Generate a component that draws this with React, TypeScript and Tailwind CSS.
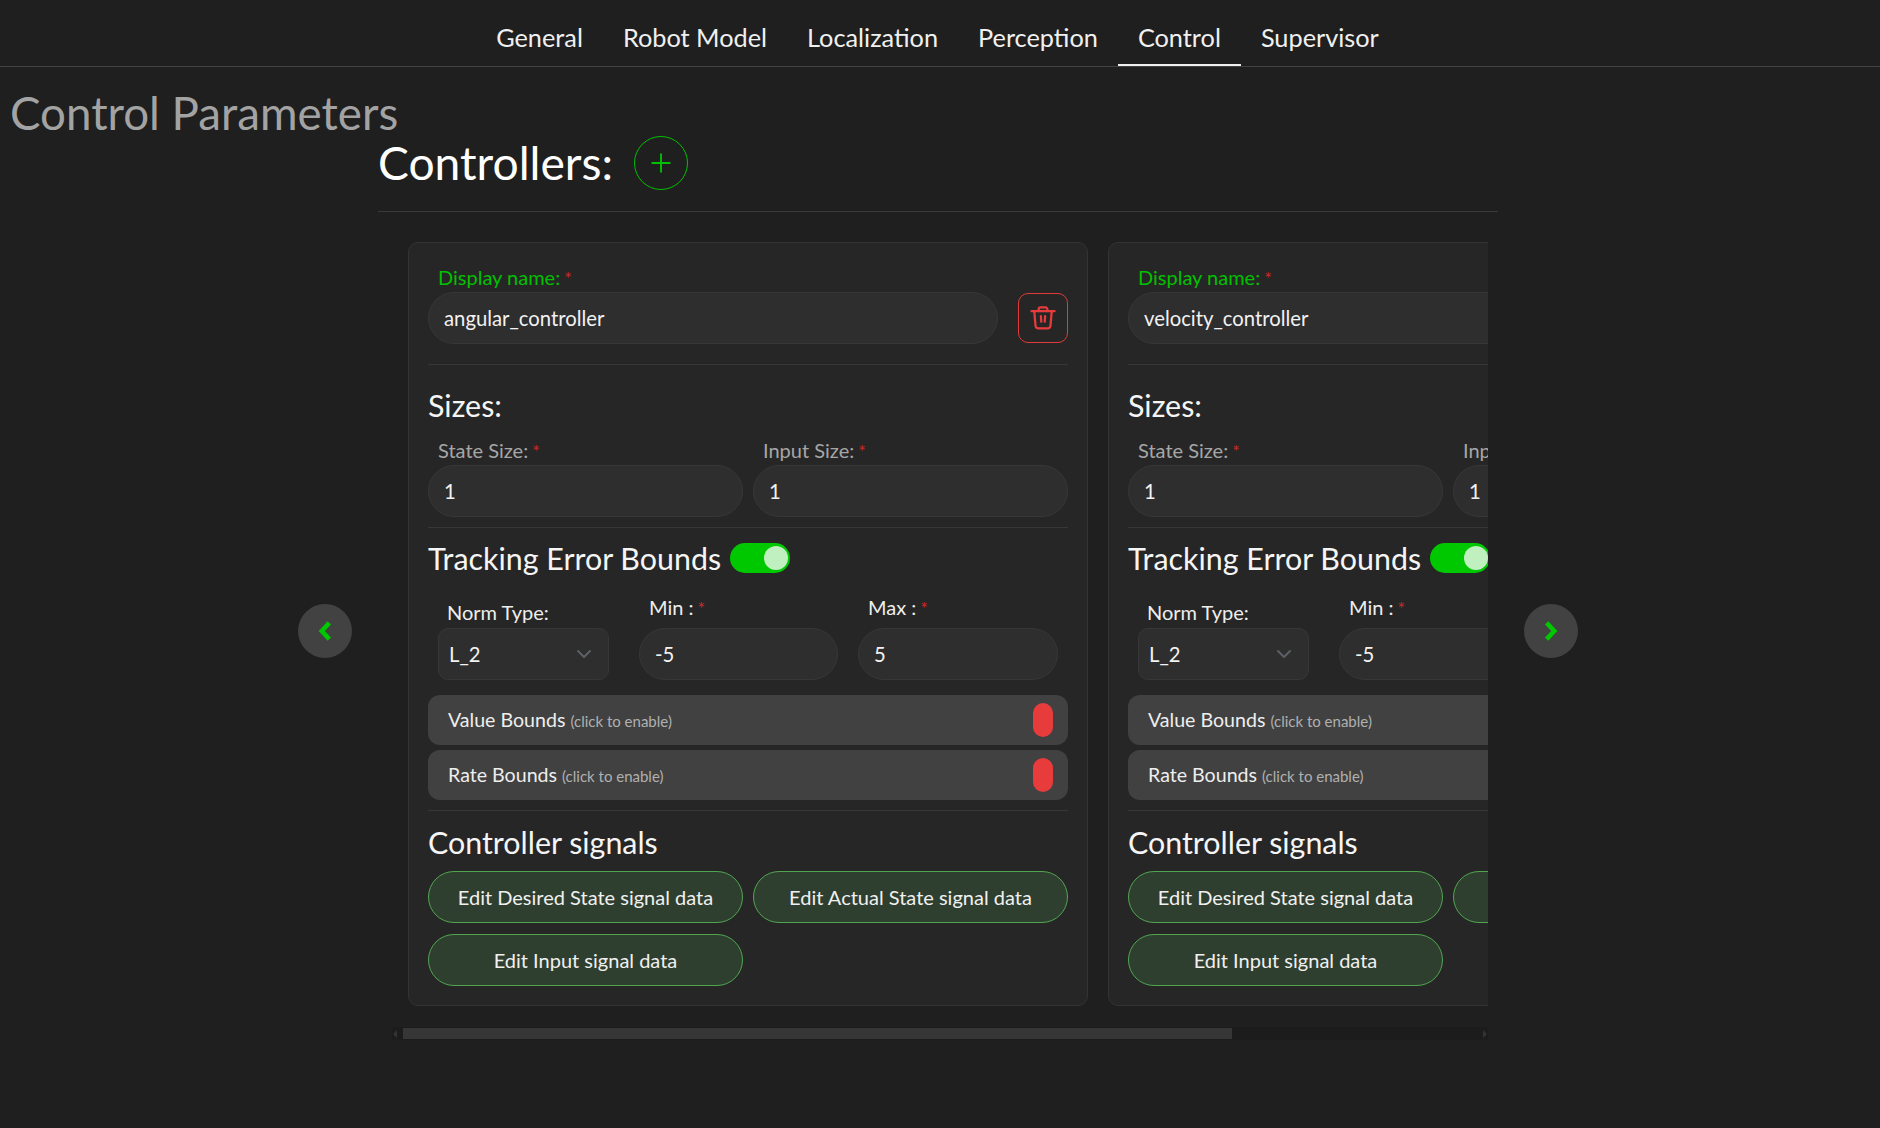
import { ChevronDown, Plus } from 'lucide-react'

const tabs = ['General', 'Robot Model', 'Localization', 'Perception', 'Control', 'Supervisor']

function Required() {
  return <span className="text-[#c92a2a] ml-[4px] text-[18px]">*</span>
}

function TextBox({ value, className }: { value: string; className?: string }) {
  return (
    <div className={`h-[52px] flex items-center pl-[15px] rounded-[26px] bg-[#2e2e2e] border border-[#373737] text-[20.3px] text-[#f2f2f2] min-w-0 ${className ?? ''}`}>
      {value}
    </div>
  )
}

function Divider() {
  return <div className="h-[1px] bg-[#373737]" />
}

function BoundsRow({ label }: { label: string }) {
  return (
    <div className="h-[50px] rounded-[12px] bg-[#414141] flex items-center justify-between pl-[20px] pr-[15px]">
      <p className="text-[19.6px] text-[#eeeeee] leading-none">
        {label} <span className="text-[15px] text-[#b0b0b0]">(click to enable)</span>
      </p>
      <div className="w-[20px] h-[34px] rounded-full bg-[#e83c3c]" />
    </div>
  )
}

function SignalButton({ label }: { label: string }) {
  return (
    <div className="h-[52px] rounded-[26px] bg-[#2f3f2f] border border-[#51a551] flex items-center justify-center text-[20px] text-[#f0f0f0]">
      {label}
    </div>
  )
}

function TrashIcon() {
  return (
    <svg viewBox="0 0 24 24" className="w-[30px] h-[30px] text-[#e83c3c]" fill="none" stroke="currentColor" strokeWidth={1.8} strokeLinecap="round" strokeLinejoin="round">
      <path d="M2.8 6.5h18.4" />
      <path d="M8.5 6.5V5a1.5 1.5 0 0 1 1.5-1.5h4A1.5 1.5 0 0 1 15.500 5v1.500" />
      <path d="M5 6.500l1 11.500a2.500 2.500 0 0 0 2.500 2.300h7a2.500 2.500 0 0 0 2.500-2.300l1-11.500" />
      <path d="M10.300 10.500l.3 4.500" />
      <path d="M13.700 10.500l-.3 4.500" />
    </svg>
  )
}

function ControllerCard({ name }: { name: string }) {
  return (
    <div className="w-[680px] h-[764px] flex-shrink-0 rounded-[10px] bg-[#262626] border border-[#333333] px-[19px] pt-[20px]">
      <div className="h-[29px] pl-[10px] text-[20px] leading-[29px] text-[#00c000]">
        Display name:<Required />
      </div>
      <div className="flex items-center gap-[20px] h-[52px]">
        <TextBox value={name} className="w-[570px]" />
        <button className="w-[50px] h-[50px] rounded-[10px] border border-[#e03a3a] flex items-center justify-center">
          <TrashIcon />
        </button>
      </div>
      <div className="mt-[20px]"><Divider /></div>

      <h3 className="mt-[22px] h-[36px] text-[30.4px] leading-[36px] text-[#f5f5f5]">Sizes:</h3>
      <div className="grid grid-cols-2 gap-x-[10px] mt-[13px]">
        <div>
          <div className="h-[29px] pl-[10px] text-[20px] leading-[29px] text-[#a6a6a6]">State Size:<Required /></div>
          <TextBox value="1" />
        </div>
        <div>
          <div className="h-[29px] pl-[10px] text-[20px] leading-[29px] text-[#a6a6a6]">Input Size:<Required /></div>
          <TextBox value="1" />
        </div>
      </div>
      <div className="mt-[10px]"><Divider /></div>

      <div className="flex items-center gap-[9px] mt-[11px] h-[38px]">
        <h3 className="text-[30.4px] leading-[38px] text-[#f5f5f5]">Tracking Error Bounds</h3>
        <div className="w-[60px] h-[30px] rounded-full bg-[#00c800] flex items-center justify-end pr-[2px]">
          <div className="w-[24px] h-[24px] rounded-full bg-[#c0f0c0]" />
        </div>
      </div>

      <div className="flex gap-[30px] pl-[10px] mt-[17px] items-end">
        <div className="w-[171px] flex-shrink-0">
          <div className="pl-[9px] h-[29px] text-[20px] leading-[26px] text-[#eeeeee]">Norm Type:</div>
          <div className="h-[52px] rounded-[10px] bg-[#2e2e2e] border border-[#373737] flex items-center justify-between pl-[10px] pr-[12px] text-[20.3px] text-[#f2f2f2]">
            L_2
            <ChevronDown className="w-[24px] h-[24px] text-[#5c5f66]" strokeWidth={2} />
          </div>
        </div>
        <div className="w-[199px] flex-shrink-0">
          <div className="pl-[10px] h-[34px] text-[20px] leading-[26px] text-[#eeeeee]">Min :<Required /></div>
          <TextBox value="-5" />
        </div>
        <div className="w-[200px] flex-shrink-0 -ml-[10px]">
          <div className="pl-[10px] h-[34px] text-[20px] leading-[26px] text-[#eeeeee]">Max :<Required /></div>
          <TextBox value="5" />
        </div>
      </div>

      <div className="flex flex-col gap-[5px] mt-[15px]">
        <BoundsRow label="Value Bounds" />
        <BoundsRow label="Rate Bounds" />
      </div>
      <div className="mt-[10px]"><Divider /></div>

      <h3 className="mt-[12px] h-[38px] text-[30.4px] leading-[38px] text-[#f5f5f5]">Controller signals</h3>
      <div className="grid grid-cols-2 gap-x-[10px] gap-y-[11px] mt-[10px]">
        <SignalButton label="Edit Desired State signal data" />
        <SignalButton label="Edit Actual State signal data" />
        <SignalButton label="Edit Input signal data" />
      </div>
    </div>
  )
}

function ArrowButton({ dir }: { dir: 'left' | 'right' }) {
  return (
    <button className="w-[54px] h-[54px] flex-shrink-0 rounded-full bg-[#424242] flex items-center justify-center">
      <svg viewBox="0 0 24 24" className="w-[26px] h-[26px] text-[#00c800]" fill="none" stroke="currentColor" strokeWidth={4.2}>
        {dir === 'left' ? <polyline points="16,4.500 9,12 16,19.500" /> : <polyline points="8,4.500 15,12 8,19.500" />}
      </svg>
    </button>
  )
}

export default function App() {
  return (
    <div className="min-h-[1128px] bg-[#1f1f1f] font-['Lato','Liberation_Sans',sans-serif] overflow-hidden">
      {/* Tabs */}
      <div className="h-[67px] border-b border-[#424242] flex justify-center pr-[5px]">
        {tabs.map((t) => (
          <div
            key={t}
            className={`h-[66px] px-[20px] pt-[20px] text-[25.3px] leading-[34px] text-[#f0f0f0] ${t === 'Control' ? 'border-b-[2px] border-[#eeeeee]' : ''}`}
          >
            {t}
          </div>
        ))}
      </div>

      <h1 className="pl-[10px] pt-[18px] h-[69px] text-[45.7px] leading-[56px] text-[#a3a3a3]">Control Parameters</h1>

      <div className="w-[1120px] ml-[378px]">
        <div className="flex items-center gap-[21px] h-[54px]">
          <h2 className="text-[46.2px] leading-[54px] text-white -mt-[3px]">Controllers:</h2>
          <button className="w-[54px] h-[54px] rounded-full border border-[#00c000] flex items-center justify-center">
            <Plus className="w-[30px] h-[30px] text-[#00c000]" strokeWidth={1.5} />
          </button>
        </div>
        <div className="h-[1px] bg-[#3a3a3a] mt-[21px]" />
      </div>

      <div className="flex items-center ml-[298px] mt-[9px]">
        <ArrowButton dir="left" />
        <div className="w-[1096px] ml-[40px] flex-shrink-0">
          <div className="overflow-hidden pl-[16px] pt-[21px] flex gap-[20px]">
            <ControllerCard name="angular_controller" />
            <ControllerCard name="velocity_controller" />
          </div>
          {/* scrollbar */}
          <div className="mt-[21px] h-[13px] bg-[#1c1c1c] flex items-center relative">
            <div className="ml-[11px] w-[829px] h-[11px] bg-[#363636]" />
            <div className="absolute left-[1px] w-0 h-0 border-y-[4px] border-y-transparent border-r-[4px] border-r-[#333333]" />
            <div className="absolute right-[1px] w-0 h-0 border-y-[4px] border-y-transparent border-l-[4px] border-l-[#333333]" />
          </div>
        </div>
        <div className="ml-[36px]"><ArrowButton dir="right" /></div>
      </div>
    </div>
  )
}
